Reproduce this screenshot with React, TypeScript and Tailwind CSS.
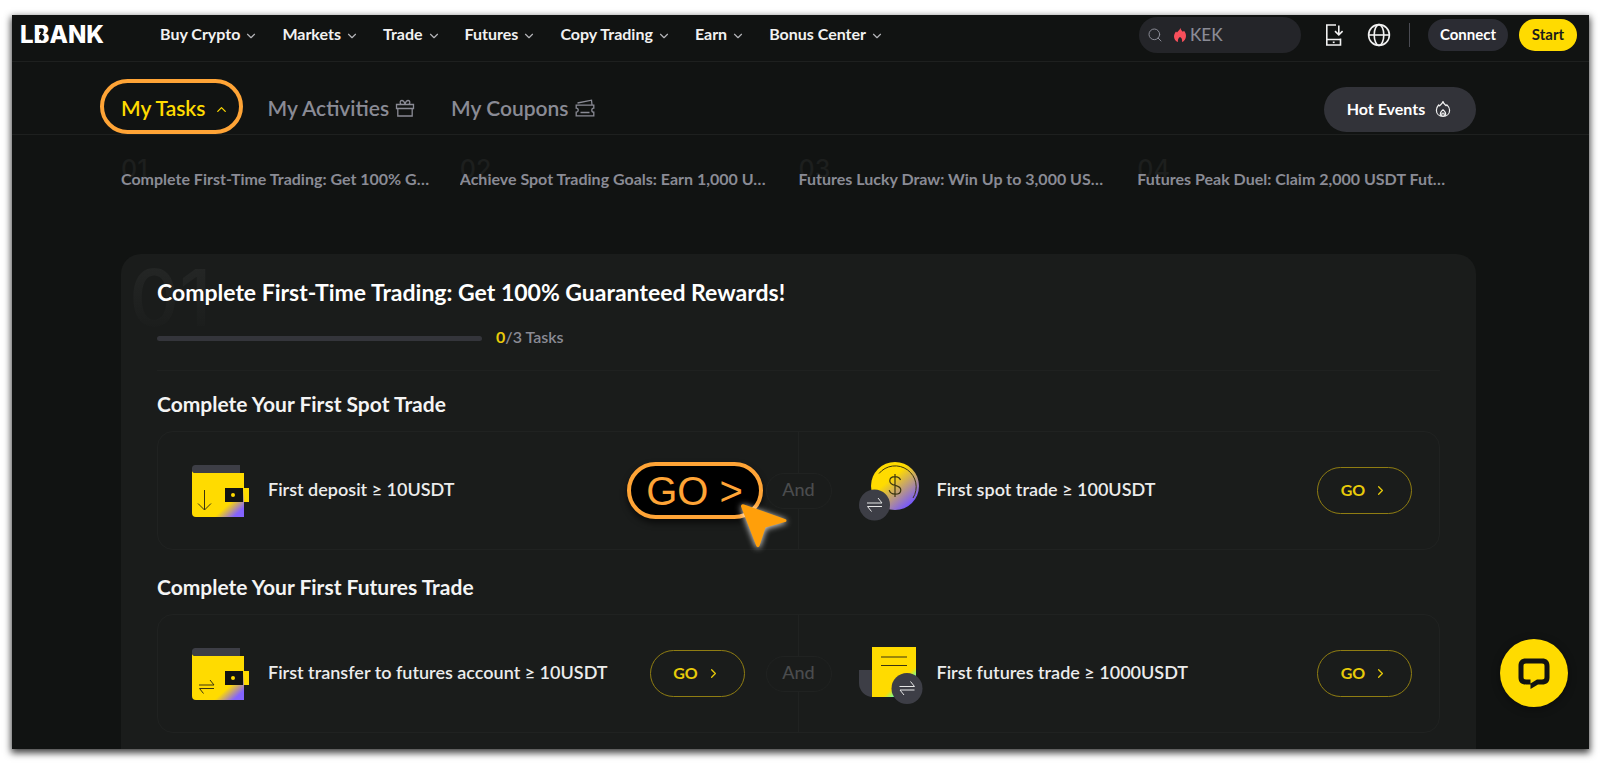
import type { ReactNode } from "react";
import { ChevronDown, ChevronRight, ChevronUp, Search } from "lucide-react";

const navItems = ["Buy Crypto", "Markets", "Trade", "Futures", "Copy Trading", "Earn", "Bonus Center"];

const steps = [
    { no: "01", title: "Complete First-Time Trading: Get 100% G…" },
    { no: "02", title: "Achieve Spot Trading Goals: Earn 1,000 U…" },
    { no: "03", title: "Futures Lucky Draw: Win Up to 3,000 US…" },
    { no: "04", title: "Futures Peak Duel: Claim 2,000 USDT Fut…" },
];

function Logo() {
    return (
        <a href="#" aria-label="LBANK home" className="relative block w-[84px] font-['Inter',sans-serif] text-[24px] leading-6 font-extrabold text-white">
            LBANK
            <svg viewBox="0 0 6 18" className="absolute top-[3px] left-[20px] h-[18px] w-[6px]" aria-hidden="true">
                <path d="M1 3.5h2.4v4L1.8 9l1.600 1.500v4H1v-3.200L0 10.200V7.800l1-1.100z" fill="#111312" />
            </svg>
        </a>
    );
}

function PhoneIcon() {
    return (
        <svg viewBox="0 0 20 24" className="h-6 w-5" fill="none" stroke="#f1f1f1" strokeWidth="1.6" aria-hidden="true">
            <path d="M12 2H2.800v20h13.700v-6.500M2.800 16.500h13.700" />
            <path d="M14.800 2.500v9M11 8.200l3.800 3.600L18.600 8.200" />
            <path d="M8.800 19.300h1.800" />
        </svg>
    );
}

function GlobeIcon() {
    return (
        <svg viewBox="0 0 24 24" className="size-6" fill="none" stroke="#f1f1f1" strokeWidth="1.6" aria-hidden="true">
            <circle cx="12" cy="12" r="10.4" />
            <ellipse cx="12" cy="12" rx="4.8" ry="10.4" />
            <path d="M1.600 12h20.800" />
        </svg>
    );
}

function FireIcon() {
    return (
        <svg viewBox="0 0 14 16" className="h-4 w-3.5" aria-hidden="true">
            <path d="M7.400 1c.4 2 1.600 3 2.600 3.800l1-1C12.400 5.200 13 7.300 13 9c0 3-1.700 5.200-4 6 .4-2.600-.400-4.200-2-5-1.600 1-2.400 2.600-2 5-2.400-.800-4-3-4-5.600C1 7.200 2 5.600 3 4.400l1 1C5 4.400 6.600 3 7.400 1z" fill="#f84f5b" />
        </svg>
    );
}

function FlameOutline() {
    return (
        <svg viewBox="0 0 16 18" className="h-[18px] w-4" fill="none" stroke="#f1f1f1" strokeWidth="1.2" strokeLinejoin="round" aria-hidden="true">
            <path d="M8 1.500c.5 2.200 2 3 3 4.200l1-.9c1.600 1.600 2.600 3.400 2.600 5.400 0 3.600-2.800 6.100-6.600 6.100s-6.600-2.500-6.600-6.100c0-2.200 1-3.800 2.200-5.200l.9.9C5.500 4.800 7.500 3.500 8 1.500z" />
            <path d="M5.700 15.800c-1.200-2.600.6-4.600 2.300-6 1.700 1.400 3.500 3.400 2.300 6M6.800 16v-1.800a1.200 1.200 0 0 1 2.400 0V16" />
        </svg>
    );
}

function GiftIcon() {
    return (
        <svg viewBox="0 0 20 18" className="h-[18px] w-5" fill="none" stroke="currentColor" strokeWidth="1.3" aria-hidden="true">
            <path d="M1.500 5.500h17v4h-17zM2.800 9.500v7.500h14.400V9.500" />
            <path d="M10 5.500C9.500 3 8.300 1.500 6.800 1.500 5 1.500 4.600 4 6 5.500M10 5.500c.5-2.500 1.700-4 3.200-4 1.800 0 2.200 2.500.8 4" />
        </svg>
    );
}

function CouponIcon() {
    return (
        <svg viewBox="0 0 20 18" className="h-[18px] w-5" fill="none" stroke="currentColor" strokeWidth="1.3" aria-hidden="true">
            <path d="M1.200 6.200h17.600v3a2 2 0 0 0 0 4v3.600H1.200v-3.600a2 2 0 0 0 0-4z" />
            <path d="M2.500 4 16.500 1.200 17 6M5.500 13.500h9" />
        </svg>
    );
}

function SwapLines() {
    return <path d="M0 5h15l-4-5M15 8.500H0.500l4 5" />;
}

function WalletIcon({ swap = false }: { swap?: boolean }) {
    const id = swap ? "wallet-swap" : "wallet-deposit";
    return (
        <svg viewBox="0 0 60 54" className="h-[54px] w-[60px] shrink-0" fill="none" aria-hidden="true">
            <defs>
                <linearGradient id={id} x1="8" y1="6" x2="52" y2="54" gradientUnits="userSpaceOnUse">
                    <stop offset="0.68" stopColor="#ffdb00" />
                    <stop offset="0.88" stopColor="#8463ff" />
                </linearGradient>
            </defs>
            <path d="M0 5v44a4 4 0 0 0 4 4h48V9H4a4 4 0 0 1-4-4z" fill={`url(#${id})`} />
            <path d="M3.500 1H48v8H3a3 3 0 0 1-3-3V4.500A3.500 3.500 0 0 1 3.500 1z" fill="#3d3e46" />
            <path d="M33 24h18v14H33z" fill="#111312" />
            <path d="M52 24h5v14h-5z" fill="#ffdb00" />
            <circle cx="41" cy="31" r="2" fill="#ffdb00" />
            {swap ? (
                <g transform="translate(7 33)" stroke="#3a3410" strokeWidth="1"><SwapLines /></g>
            ) : (
                <path d="M12.500 26v20M6 39.500l6.500 6.500 6.500-6.500" stroke="#3a3410" strokeWidth="1" />
            )}
        </svg>
    );
}

function CoinIcon() {
    return (
        <svg viewBox="0 0 62 60" className="h-[60px] w-[62px] shrink-0" fill="none" aria-hidden="true">
            <defs>
                <linearGradient id="coin" x1="20" y1="8" x2="52" y2="46" gradientUnits="userSpaceOnUse">
                    <stop offset="0.3" stopColor="#ffdb00" />
                    <stop offset="0.95" stopColor="#7658ff" />
                </linearGradient>
            </defs>
            <circle cx="36" cy="25" r="24" fill="url(#coin)" />
            <path d="M20 12.500A21 21 0 0 1 54 37" stroke="#3a3410" strokeWidth="1" />
            <path d="M36 13v23M41.500 19c-1-2.500-3-3.300-5.500-3.300-3 0-5.200 1.600-5.200 4.200 0 6 11 3 11 9 0 2.700-2.400 4.300-5.600 4.300-3 0-5.200-1.200-6-4" stroke="#3a3410" strokeWidth="1.200" />
            <circle cx="15.500" cy="44" r="15.500" fill="#3d3e46" />
            <g transform="translate(8 37)" stroke="#e6e6e6" strokeWidth="1"><SwapLines /></g>
        </svg>
    );
}

function ContractIcon() {
    return (
        <svg viewBox="0 0 64 58" className="mt-0.5 h-[58px] w-16 shrink-0" fill="none" aria-hidden="true">
            <defs>
                <linearGradient id="sheet" x1="40" y1="15" x2="62" y2="39" gradientUnits="userSpaceOnUse">
                    <stop offset="0.48" stopColor="#ffdb00" />
                    <stop offset="0.7" stopColor="#6fff9a" />
                </linearGradient>
            </defs>
            <path d="M0 24h14v27A14 14 0 0 1 0 37z" fill="#3d3e46" />
            <path d="M13 1h44v50H13z" fill="url(#sheet)" />
            <path d="M22 11h26M22 19.500h26" stroke="#3a3410" strokeWidth="1.200" />
            <circle cx="48" cy="42.500" r="15.500" fill="#3d3e46" />
            <g transform="translate(40.500 35.500)" stroke="#e6e6e6" strokeWidth="1"><SwapLines /></g>
        </svg>
    );
}

function ChatIcon() {
    return (
        <svg viewBox="0 0 32 32" className="mt-0.5 size-8" fill="#111312" aria-hidden="true">
            <path fillRule="evenodd" d="M8 .5C3 .5.500 3 .5 8v11.500c0 4.500 2.500 7 7.500 7h4.500V31l7.500-4.500h4c5 0 7.500-2.500 7.500-7V8c0-5-2.500-7.500-7.500-7.500zM8 5.500h16c1.800 0 2.500.7 2.500 2.500v11c0 1.800-.7 2.500-2.500 2.500h-5l-6.500 4v-4H8c-1.800 0-2.500-.7-2.500-2.500V8c0-1.800.7-2.500 2.500-2.500z" />
        </svg>
    );
}

function GoButton() {
    return (
        <button className="flex h-[47px] w-[95px] shrink-0 items-center justify-center gap-2 rounded-full border border-[#8f7d12] pb-0.5 text-[16px] font-bold text-[#e8cb0a]">
            GO
            <ChevronRight size={15} strokeWidth={2} className="mt-0.5" />
        </button>
    );
}

function HighlightedGo() {
    return (
        <div className="relative -mr-[18px] shrink-0">
            <button className="h-[57px] w-[136px] rounded-full border-4 border-[#ffa436] bg-black font-['Liberation_Sans',sans-serif] text-[40px] leading-[48px] text-[#ffa436] shadow-[0_4px_6px_rgba(0,0,0,0.6)]">
                GO &gt;
            </button>
            <svg viewBox="0 0 60 60" className="absolute top-[34px] left-[104px] size-[60px] drop-shadow-[0_1px_3px_rgba(255,255,255,0.9)]" aria-hidden="true">
                <path d="M10 10.500a2 2 0 0 1 3-2l41 14.500a1.500 1.500 0 0 1 0 3L34.500 31.500 28.500 50a1.700 1.700 0 0 1-3.200 0z" fill="#ff9f0a" />
            </svg>
        </div>
    );
}

type Task = { icon: ReactNode; label: string; action: ReactNode };

function TaskPair({ title, left, right }: { title: string; left: Task; right: Task }) {
    return (
        <section>
            <h3 className="text-[21px] leading-7 font-bold text-[#f4f4f4]">{title}</h3>
            <div className="relative mt-[13px] grid h-[119px] grid-cols-2 rounded-2xl border border-[#202221]">
                <div className="flex items-center border-r border-[#202221] pr-[53px] pl-[34px]">
                    {left.icon}
                    <span className="ml-4 flex-1 pb-0.5 text-[18px] font-semibold text-[#ececec]">{left.label}</span>
                    {left.action}
                </div>
                <div className="flex items-center pr-[27px] pl-[60px]">
                    <div className="w-[62px] shrink-0">{right.icon}</div>
                    <span className="ml-4 flex-1 pb-0.5 text-[18px] font-semibold text-[#ececec]">{right.label}</span>
                    {right.action}
                </div>
                <span className="absolute top-1/2 left-1/2 flex h-9 w-[66px] -translate-1/2 items-center justify-center rounded-full border border-[#202221] bg-[#1a1c1b] pb-0.5 text-[18px] font-medium text-[#4b4c4e]">
                    And
                </span>
            </div>
        </section>
    );
}

export default function App() {
    return (
        <div className="bg-white pt-[15px] pr-[11px] pb-[15px] pl-3 font-['Lato',sans-serif]">
            <div className="relative overflow-hidden bg-[#111312] shadow-[0_3px_7px_1px_rgba(0,0,0,0.75)]">
                <header className="flex h-[47px] items-center border-b border-[#1e201f] pt-0.5 pr-3 pb-2 pl-2">
                    <Logo />
                    <nav className="ml-14 flex flex-1 items-center gap-6 pb-0.5">
                        {navItems.map((item) => (
                            <a key={item} href="#" className="flex items-center gap-1 text-[16px] font-bold whitespace-nowrap text-[#f1f1f1]">
                                {item}
                                <ChevronDown size={14} strokeWidth={2} className="mt-1 text-[#b4b4b8]" />
                            </a>
                        ))}
                    </nav>
                    <label className="flex h-9 w-[162px] items-center rounded-full bg-[#242529] pl-2 text-[#8a8b95]">
                        <Search size={16} strokeWidth={1.5} className="mr-2.5 shrink-0" />
                        <FireIcon />
                        <input aria-label="Search" placeholder="KEK" className="ml-[3px] w-20 bg-transparent text-[17px] font-medium outline-none placeholder:text-[#8a8b95]" />
                    </label>
                    <button aria-label="Download app" className="ml-[23px]"><PhoneIcon /></button>
                    <button aria-label="Language" className="ml-[23px]"><GlobeIcon /></button>
                    <span className="mr-[18px] ml-[18px] h-6 w-px bg-[#4a4b52]" />
                    <button className="h-8 w-20 rounded-full bg-[#2b2c33] pb-0.5 text-[15px] font-bold text-white">Connect</button>
                    <button className="ml-[11px] h-8 w-[58px] rounded-full bg-[#ffdb00] pb-0.5 text-[15px] font-bold text-[#1a1c1b]">Start</button>
                </header>

                <div className="flex h-[73px] items-center border-b border-[#1e201f] pt-[25px] pr-[113px] pb-0.5 pl-[109px] text-[21px] font-semibold text-[#8a8b95]">
                    <div className="relative mb-1">
                        <button className="flex items-center gap-2 text-[#ffdb00]">
                            My Tasks
                            <ChevronUp size={15} strokeWidth={2} className="mt-1" />
                        </button>
                        <span className="pointer-events-none absolute -top-[13px] -right-3.5 -bottom-[11px] -left-[21px] rounded-full border-4 border-[#ffa436]" />
                    </div>
                    <button className="mb-1 ml-[39px] flex items-center gap-1.5">My Activities <GiftIcon /></button>
                    <button className="mb-1 ml-9 flex flex-1 items-center gap-1.5">My Coupons <CouponIcon /></button>
                    <button className="flex h-[45px] w-[152px] items-center justify-center gap-2.5 rounded-full bg-[#323339] pr-0.5 pb-0.5 text-[16px] font-bold text-white">
                        Hot Events <FlameOutline />
                    </button>
                </div>

                <main className="pr-[113px] pl-[109px]">
                    <ol className="grid grid-cols-4 pt-6">
                        {steps.map((step) => (
                            <li key={step.no} className="relative">
                                <span className="absolute -top-0.5 left-0 font-['Inter',sans-serif] text-[25px] leading-6 font-medium text-[#1d1f1e]">{step.no}</span>
                                <a href="#" className="relative mt-2 block truncate pr-5 text-[16px] leading-6 font-bold text-[#8a8b95]">{step.title}</a>
                            </li>
                        ))}
                    </ol>

                    <div className="relative mt-[63px] rounded-t-[20px] bg-[#1a1c1b] px-9 pt-[22px] pb-4">
                        <span className="absolute top-1.5 left-2 bg-gradient-to-b from-[#252726] to-[#1a1c1b] bg-clip-text font-['Inter',sans-serif] text-[78px] leading-[76px] font-medium text-transparent">01</span>
                        <h2 className="relative text-[23px] leading-8 font-bold text-white">Complete First-Time Trading: Get 100% Guaranteed Rewards!</h2>
                        <div className="mt-[18px] flex items-center gap-3.5 border-b border-[#1f2120] pb-5">
                            <div className="h-[5px] w-[325px] rounded-full bg-[#34353b]" />
                            <p className="pb-0.5 text-[16px] leading-[22px] font-semibold text-[#8a8b95]"><span className="font-bold text-[#e8cb0a]">0</span>/3 Tasks</p>
                        </div>
                        <div className="mt-[19px] space-y-[23px]">
                            <TaskPair
                                title="Complete Your First Spot Trade"
                                left={{ icon: <WalletIcon />, label: "First deposit ≥ 10USDT", action: <HighlightedGo /> }}
                                right={{ icon: <CoinIcon />, label: "First spot trade ≥ 100USDT", action: <GoButton /> }}
                            />
                            <TaskPair
                                title="Complete Your First Futures Trade"
                                left={{ icon: <WalletIcon swap />, label: "First transfer to futures account ≥ 10USDT", action: <GoButton /> }}
                                right={{ icon: <ContractIcon />, label: "First futures trade ≥ 1000USDT", action: <GoButton /> }}
                            />
                        </div>
                    </div>
                </main>

                <button aria-label="Open chat" className="absolute right-[21px] bottom-[42px] flex size-[68px] items-center justify-center rounded-full bg-[#ffdb00] shadow-[0_2px_8px_rgba(0,0,0,0.4)]">
                    <ChatIcon />
                </button>
            </div>
        </div>
    );
}
